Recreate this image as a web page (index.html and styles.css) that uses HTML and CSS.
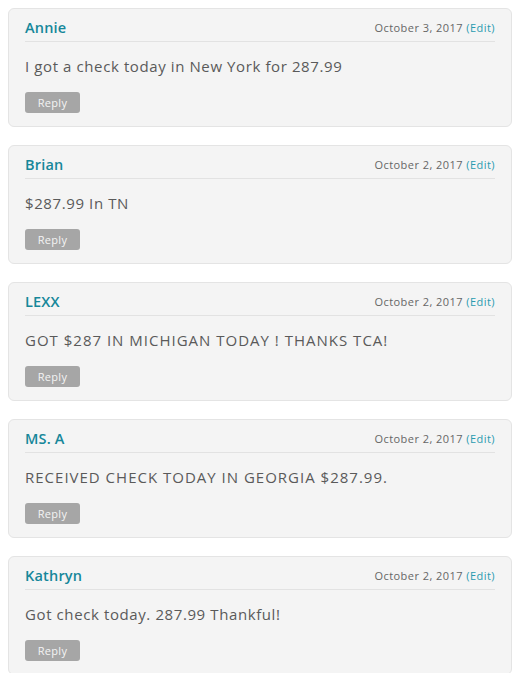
FILE: index.html
```html
<!DOCTYPE html>
<html lang="en">
<head>
  <meta charset="UTF-8">
  <title>Comments</title>
  <link rel="stylesheet" href="styles.css">
</head>
<body>

<div class="comments">
  <div class="comment">
    <div class="comment-head">
      <span class="author">Annie</span>
      <span class="date">October 3, 2017 <a href="#">(Edit)</a></span>
    </div>
    <p class="text">I got a check today in New York for 287.99</p>
    <button class="reply">Reply</button>
  </div>

  <div class="comment">
    <div class="comment-head">
      <span class="author">Brian</span>
      <span class="date">October 2, 2017 <a href="#">(Edit)</a></span>
    </div>
    <p class="text">$287.99 In TN</p>
    <button class="reply">Reply</button>
  </div>

  <div class="comment">
    <div class="comment-head">
      <span class="author">LEXX</span>
      <span class="date">October 2, 2017 <a href="#">(Edit)</a></span>
    </div>
    <p class="text caps">GOT $287 IN MICHIGAN TODAY ! THANKS TCA!</p>
    <button class="reply">Reply</button>
  </div>

  <div class="comment">
    <div class="comment-head">
      <span class="author">MS. A</span>
      <span class="date">October 2, 2017 <a href="#">(Edit)</a></span>
    </div>
    <p class="text caps">RECEIVED CHECK TODAY IN GEORGIA $287.99.</p>
    <button class="reply">Reply</button>
  </div>

  <div class="comment">
    <div class="comment-head">
      <span class="author">Kathryn</span>
      <span class="date">October 2, 2017 <a href="#">(Edit)</a></span>
    </div>
    <p class="text">Got check today. 287.99 Thankful!</p>
    <button class="reply">Reply</button>
  </div>
</div>

</body>
</html>
```

FILE: styles.css
```css
body {
  margin: 0;
  padding: 8px 2px 0 8px;
  font-family: 'Open Sans', sans-serif;
  background: #fff;
  color: #555;
  overflow: hidden;
}
.comments {
  display: flex;
  flex-direction: column;
  gap: 18px;
}
.comment {
  background: #f4f4f4;
  border: 1px solid #e4e4e4;
  border-radius: 6px;
  padding: 8px 16px 13px;
}
.comment-head {
  display: flex;
  justify-content: space-between;
  align-items: center;
  height: 20px;
  padding-bottom: 4px;
  border-bottom: 1px solid #e2e2e2;
}
.author {
  font-size: 14.5px;
  font-weight: 600;
  letter-spacing: 0.2px;
  color: #16879a;
}
.date {
  font-size: 11px;
  letter-spacing: 0.45px;
  color: #666;
}
.date a {
  color: #2a9bb0;
  text-decoration: none;
}
.text {
  margin: 15px 0 17px;
  font-size: 15px;
  line-height: 18px;
  letter-spacing: 0.6px;
  color: #5a5a5a;
}
.text.caps {
  letter-spacing: 1px;
}
.reply {
  display: block;
  width: 55px;
  height: 21px;
  padding: 0;
  border: none;
  border-radius: 3px;
  background: #a6a6a6;
  color: #f4f4f4;
  font-family: 'Open Sans', sans-serif;
  font-size: 11px;
  letter-spacing: 0.3px;
  cursor: pointer;
}
```
